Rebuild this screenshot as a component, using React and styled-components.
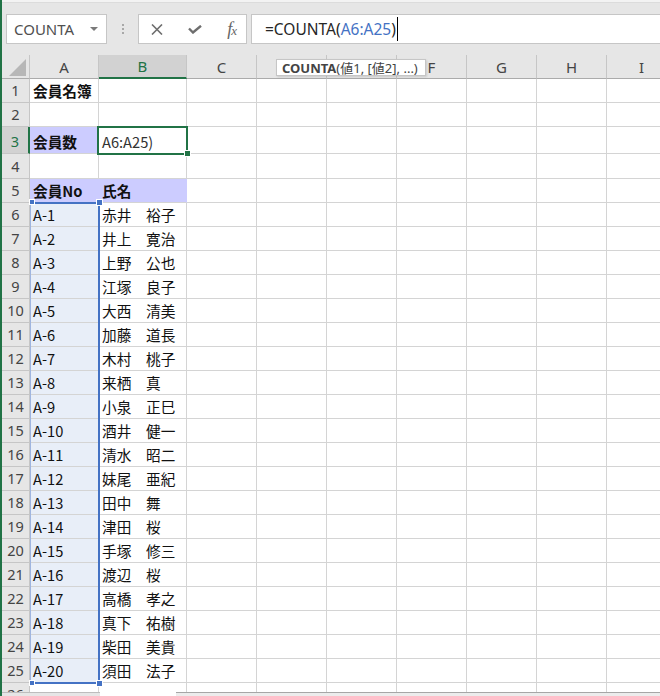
import styled, { createGlobalStyle } from "styled-components";

const GREEN = "#217346";
const BLUE = "#4472c4";
const TOOL_BG = "#e6e6e6";
const HEAD_SEL = "#d2d2d2";
const GRID_LINE = "#d4d4d4";
const HEAD_LINE = "#c6c6c6";
const LAVENDER = "#ccccff";
const RANGE_FILL = "#e8eef8";

const UI_FONT = `"Noto Sans", "Noto Sans CJK JP", sans-serif`;
const CELL_FONT = `"Noto Sans CJK JP", "Noto Sans", sans-serif`;

const GlobalStyle = createGlobalStyle`
  html, body {
    margin: 0;
    padding: 0;
    background: #ffffff;
    overflow: hidden;
  }
`;

const Frame = styled.div`
  display: flex;
  width: 660px;
  height: 696px;
  overflow: hidden;
  background: ${TOOL_BG};
`;

const WindowEdge = styled.div`
  width: 2px;
  flex-shrink: 0;
  background: ${GREEN};
`;

const Main = styled.div`
  flex: 1;
  min-width: 0;
  display: flex;
  flex-direction: column;
`;

const TopStrip = styled.div`
  height: 2px;
  background: #f3f3f3;
  border-bottom: 1px solid #dcdcdc;
`;

const FormulaBar = styled.div`
  display: flex;
  align-items: center;
  height: 30px;
  margin: 11px 0;
  padding-left: 4px;
  font-family: ${UI_FONT};
`;

const NameBox = styled.div`
  box-sizing: border-box;
  width: 101px;
  height: 30px;
  display: flex;
  align-items: center;
  justify-content: space-between;
  padding: 0 8px 0 7px;
  background: #fff;
  border: 1px solid ${HEAD_LINE};
  font-size: 15px;
  color: #505050;
`;

const DropArrow = styled.span`
  width: 0;
  height: 0;
  border-left: 4px solid transparent;
  border-right: 4px solid transparent;
  border-top: 4px solid #7a7a7a;
`;

const Grip = styled.div`
  width: 31px;
  display: flex;
  flex-direction: column;
  align-items: center;
  gap: 2px;

  span {
    width: 2px;
    height: 2px;
    background: #a8a8a8;
  }
`;

const FuncButtons = styled.div`
  box-sizing: border-box;
  width: 109px;
  height: 30px;
  display: flex;
  align-items: center;
  justify-content: space-between;
  padding: 0 10px 0 12px;
  background: #fff;
  border: 1px solid ${HEAD_LINE};
`;

const FxLabel = styled.span`
  font-family: "Liberation Serif", serif;
  font-style: italic;
  font-size: 18px;
  line-height: 1;
  color: #666;
  letter-spacing: -1px;

  small {
    font-size: 13px;
  }
`;

const FormulaInput = styled.div`
  flex: 1;
  height: 30px;
  margin-left: 4px;
  box-sizing: border-box;
  display: flex;
  align-items: center;
  padding-left: 13px;
  background: #fff;
  border: 1px solid ${HEAD_LINE};
  border-right: none;
  font-size: 15.5px;
  color: #262626;
  white-space: nowrap;
`;

const Ref = styled.span`
  color: ${BLUE};
`;

const Caret = styled.span`
  display: inline-block;
  width: 1px;
  height: 24px;
  margin-left: 1px;
  background: #000;
`;

const Grid = styled.div`
  position: relative;
  flex: 1;
  overflow: hidden;
  display: grid;
  grid-template-columns: 28px 69px 88px repeat(7, 70px);
  grid-template-rows: 24px 24px 24px 27px 25px repeat(22, 24px);
  align-content: start;
  background: #fff;
`;

const Corner = styled.div`
  box-sizing: border-box;
  display: flex;
  justify-content: flex-end;
  align-items: flex-end;
  padding: 0 3px 2px 0;
  background: ${TOOL_BG};
  border-right: 1px solid ${HEAD_LINE};
  border-bottom: 1px solid #ababab;

  &::after {
    content: "";
    width: 0;
    height: 0;
    border-left: 17px solid transparent;
    border-bottom: 17px solid #b7b7b7;
  }
`;

const ColHeader = styled.div`
  box-sizing: border-box;
  display: flex;
  align-items: center;
  justify-content: center;
  font-family: ${UI_FONT};
  font-size: 15px;
  color: ${(p) => (p.$active ? GREEN : "#444")};
  background: ${(p) => (p.$active ? HEAD_SEL : TOOL_BG)};
  border-right: 1px solid ${HEAD_LINE};
  border-bottom: ${(p) => (p.$active ? `2px solid ${GREEN}` : "1px solid #ababab")};
`;

const RowHeader = styled.div`
  box-sizing: border-box;
  display: flex;
  align-items: flex-end;
  justify-content: center;
  padding-bottom: 1px;
  line-height: 21px;
  font-family: ${UI_FONT};
  font-size: 14.5px;
  color: ${(p) => (p.$active ? GREEN : "#444")};
  background: ${(p) => (p.$active ? HEAD_SEL : TOOL_BG)};
  border-right: ${(p) => (p.$active ? `2px solid ${GREEN}` : `1px solid ${HEAD_LINE}`)};
  border-bottom: 1px solid ${HEAD_LINE};
`;

const Cell = styled.div`
  box-sizing: border-box;
  display: flex;
  align-items: flex-end;
  padding: 0 0 1px 3px;
  line-height: 21px;
  overflow: visible;
  white-space: nowrap;
  font-family: ${CELL_FONT};
  font-size: 14.67px;
  font-weight: ${(p) => (p.$bold ? 700 : 400)};
  color: ${(p) => p.$color || "#111"};
  background: ${(p) => p.$bg || "#fff"};
  border-right: 1px solid ${(p) => (p.$bg === LAVENDER ? LAVENDER : GRID_LINE)};
  border-bottom: 1px solid ${GRID_LINE};
`;

const RangeBox = styled.div`
  position: absolute;
  left: 28px;
  top: 147px;
  width: 70px;
  height: 482px;
  box-sizing: border-box;
  border: 2px solid ${BLUE};
  border-left: 1px solid #9fb5e0;
  pointer-events: none;
`;

const Handle = styled.div`
  position: absolute;
  left: ${(p) => p.$x}px;
  top: ${(p) => p.$y}px;
  width: ${(p) => p.$size}px;
  height: ${(p) => p.$size}px;
  background: ${(p) => p.$color};
  box-shadow: 0 0 0 1px #fff;
`;

const ActiveBox = styled.div`
  position: absolute;
  left: 95px;
  top: 71px;
  width: 91px;
  height: 29px;
  box-sizing: border-box;
  border: 2px solid ${GREEN};
  pointer-events: none;
`;

const Tooltip = styled.div`
  position: absolute;
  left: 274px;
  top: 4px;
  width: 150px;
  height: 17px;
  box-sizing: border-box;
  display: flex;
  align-items: center;
  padding: 0 5px;
  background: #fff;
  border: 1px solid ${HEAD_LINE};
  box-shadow: 1px 1px 2px rgba(0, 0, 0, 0.12);
  font-family: ${UI_FONT};
  font-size: 13px;
  color: #444;
  white-space: nowrap;

  b {
    font-weight: 700;
  }
`;

const BottomBar = styled.div`
  height: 4px;
  display: flex;
  flex-shrink: 0;
`;

const BarPiece = styled.div`
  box-sizing: border-box;
  width: ${(p) => (p.$w ? `${p.$w}px` : "auto")};
  flex: ${(p) => (p.$w ? "none" : 1)};
  background: ${(p) => p.$bg};
  border-top: ${(p) => (p.$line ? `1px solid ${p.$line}` : "none")};
`;

// D and E sit under the function tooltip, so their letters are not visible
const columns = ["A", "B", "C", "D", "E", "F", "G", "H", "I"];
const hiddenLetters = ["D", "E"];

const names = [
  "赤井　裕子", "井上　寛治", "上野　公也", "江塚　良子", "大西　清美",
  "加藤　道長", "木村　桃子", "来栖　真", "小泉　正巳", "酒井　健一",
  "清水　昭二", "妹尾　亜紀", "田中　舞", "津田　桜", "手塚　修三",
  "渡辺　桜", "高橋　孝之", "真下　祐樹", "柴田　美貴", "須田　法子",
];

const cellFor = (row, col) => {
  if (row === 1 && col === 0) return { text: "会員名簿", bold: true };
  if (row === 3 && col === 0) return { text: "会員数", bold: true, bg: LAVENDER };
  if (row === 3 && col === 1) return { text: "A6:A25)", color: "#333" };
  if (row === 5 && col === 0) return { text: "会員No", bold: true, bg: LAVENDER };
  if (row === 5 && col === 1) return { text: "氏名", bold: true, bg: LAVENDER };
  if (row >= 6 && row <= 25) {
    if (col === 0) return { text: `A-${row - 5}`, bg: RANGE_FILL };
    if (col === 1) return { text: names[row - 6] };
  }
  return { text: "" };
};

const XIcon = () => (
  <svg width="12" height="11" viewBox="0 0 12 11">
    <path d="M1 0.5 L11 10.5 M11 0.5 L1 10.5" stroke="#6e6e6e" strokeWidth="1.6" fill="none" />
  </svg>
);

const CheckIcon = () => (
  <svg width="14" height="9" viewBox="0 0 14 9">
    <path d="M1 3.5 L5 7.5 L13 0.8" stroke="#6e6e6e" strokeWidth="2.4" fill="none" />
  </svg>
);

const Row = ({ row }) => (
  <>
    <RowHeader $active={row === 3}>{row}</RowHeader>
    {columns.map((c, ci) => {
      const cell = cellFor(row, ci);
      return (
        <Cell key={c} $bold={cell.bold} $bg={cell.bg} $color={cell.color}>
          {cell.text}
        </Cell>
      );
    })}
  </>
);

const App = () => {
  const rows = Array.from({ length: 26 }, (_, i) => i + 1);

  return (
    <>
      <GlobalStyle />
      <Frame>
        <WindowEdge />
        <Main>
          <TopStrip />
          <FormulaBar>
            <NameBox>
              COUNTA
              <DropArrow />
            </NameBox>
            <Grip>
              <span />
              <span />
              <span />
            </Grip>
            <FuncButtons>
              <XIcon />
              <CheckIcon />
              <FxLabel>
                f<small>x</small>
              </FxLabel>
            </FuncButtons>
            <FormulaInput>
              =COUNTA(<Ref>A6:A25</Ref>)
              <Caret />
            </FormulaInput>
          </FormulaBar>

          <Grid>
            <Corner />
            {columns.map((c) => (
              <ColHeader key={c} $active={c === "B"}>
                {hiddenLetters.includes(c) ? "" : c}
              </ColHeader>
            ))}
            {rows.map((r) => (
              <Row key={r} row={r} />
            ))}

            <RangeBox />
            <Handle $x={28} $y={145} $size={4} $color={BLUE} />
            <Handle $x={95} $y={145} $size={5} $color={BLUE} />
            <Handle $x={28} $y={626} $size={4} $color={BLUE} />
            <Handle $x={95} $y={626} $size={5} $color={BLUE} />

            <ActiveBox />
            <Handle $x={183} $y={96} $size={5} $color={GREEN} />

            <Tooltip>
              <b>COUNTA</b>(値1, [値2], ...)
            </Tooltip>
          </Grid>

          <BottomBar>
            <BarPiece $w={98} $bg={TOOL_BG} $line="#bdbdbd" />
            <BarPiece $w={76} $bg="#fff" />
            <BarPiece $bg="#ececec" $line="#a6a6a6" />
          </BottomBar>
        </Main>
      </Frame>
    </>
  );
};

export default App;
